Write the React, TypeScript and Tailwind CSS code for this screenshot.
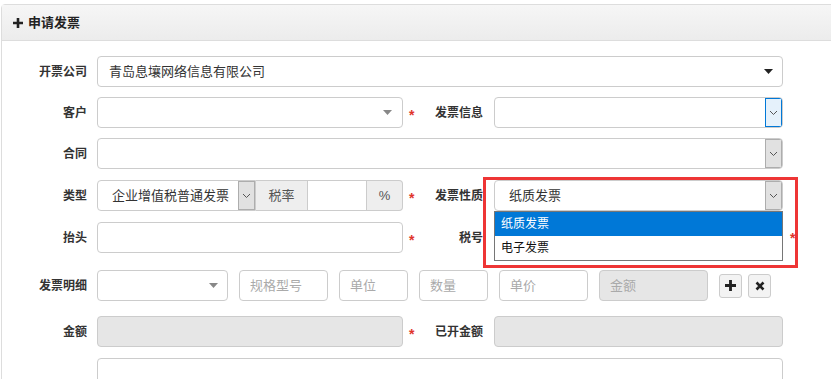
import React from 'react';

const font = { fontFamily: '"Liberation Sans", "Noto Sans CJK SC", sans-serif' };

function Chevron({ className = '' }: { className?: string }) {
	return (
		<svg width="9" height="6" viewBox="0 0 9 6" className={className}>
			<path d="M1 1 L4.5 4.5 L8 1" fill="none" stroke="#555" strokeWidth="1" />
		</svg>
	);
}

function Caret({ color }: { color: string }) {
	return (
		<svg width="9" height="5" viewBox="0 0 9 5">
			<path d="M0 0 H9 L4.5 5 Z" fill={color} />
		</svg>
	);
}

function Label({ children, w = 'w-[85px]' }: { children: React.ReactNode; w?: string }) {
	return <div className={`${w} shrink-0 text-right text-[12px] font-bold text-[#333] whitespace-nowrap`}>{children}</div>;
}

function Star() {
	return <span className="w-[13px] shrink-0 pl-[6px] pt-[4px] text-[14px] font-bold leading-none text-[#e0342b]">*</span>;
}

function Box({ className = '', children }: { className?: string; children?: React.ReactNode }) {
	return (
		<div className={`h-[31px] shrink-0 rounded-[4px] border border-[#ccc] flex items-center text-[13px] text-[#333] ${className}`}>
			{children}
		</div>
	);
}

function NativeSelect({ focus = false }: { focus?: boolean }) {
	return (
		<div
			className={`h-full w-[17px] flex items-center justify-center border ${
				focus ? 'border-[#0078d7] bg-[#e5f1fb]' : 'border-[#adadad] bg-[#e1e1e1]'
			}`}
		>
			<Chevron />
		</div>
	);
}

export default function App() {
	return (
		<div className="w-[831px] h-[379px] overflow-hidden bg-white pt-[4px] pl-[1px]" style={font}>
			<div className="relative w-[840px] h-[420px] rounded-tl-[4px] border border-[#ddd]">
				<div className="h-[36px] flex items-center gap-[5px] pl-[11px] border-b border-[#ddd] bg-gradient-to-b from-[#f6f6f6] to-[#ececec]">
					<svg width="10" height="10" viewBox="0 0 10 10">
						<path d="M3.7 0 H6.3 V3.7 H10 V6.3 H6.3 V10 H3.7 V6.3 H0 V3.7 H3.7 Z" fill="#222" />
					</svg>
					<span className="text-[13px] font-bold text-[#222]">申请发票</span>
				</div>

				<div className="pt-[15px] flex flex-col">
					{/* 开票公司 */}
					<div className="flex items-center gap-[10px]">
						<Label>开票公司</Label>
						<Box className="w-[686px] justify-between pl-[11px] pr-[9px]">
							<span>青岛息壤网络信息有限公司</span>
							<Caret color="#222" />
						</Box>
					</div>

					{/* 客户 / 发票信息 */}
					<div className="flex items-center mt-[10px]">
						<Label>客户</Label>
						<Box className="ml-[10px] w-[306px] justify-end pr-[10px]">
							<Caret color="#888" />
						</Box>
						<Star />
						<Label w="w-[67px]">发票信息</Label>
						<Box className="ml-[11px] w-[289px] justify-end overflow-hidden">
							<NativeSelect focus />
						</Box>
					</div>

					{/* 合同 */}
					<div className="flex items-center mt-[10px] gap-[10px]">
						<Label>合同</Label>
						<Box className="w-[686px] justify-end overflow-hidden">
							<NativeSelect />
						</Box>
					</div>

					{/* 类型 / 发票性质 */}
					<div className="flex items-center mt-[11px]">
						<Label>类型</Label>
						<div className="ml-[10px] w-[306px] h-[31px] flex text-[13px] text-[#333]">
							<div className="w-[159px] flex items-center justify-between rounded-l-[4px] border border-[#ccc] pl-[14px] overflow-hidden">
								<span>企业增值税普通发票</span>
								<NativeSelect />
							</div>
							<div className="w-[51px] flex items-center justify-center border-y border-[#ccc] bg-[#eee] text-[#555]">税率</div>
							<div className="w-[60px] border border-[#ccc] bg-white" />
							<div className="w-[36px] flex items-center justify-center rounded-r-[4px] border-y border-r border-[#ccc] bg-[#eee] text-[#555]">%</div>
						</div>
						<Star />
						<Label w="w-[67px]">发票性质</Label>
						<div className="relative z-20 ml-[11px]">
							<Box className="w-[289px] justify-between border-[#1d3f8c] pl-[14px] overflow-hidden bg-white">
								<span>纸质发票</span>
								<NativeSelect />
							</Box>
							<div className="absolute top-full left-0 w-[289px] border border-[#767676] bg-white text-[12px]">
								<div className="h-[24px] flex items-center px-[6px] bg-[#0078d7] text-white">纸质发票</div>
								<div className="h-[24px] flex items-center px-[6px] text-[#111]">电子发票</div>
							</div>
						</div>
					</div>

					{/* 抬头 / 税号 */}
					<div className="flex items-center mt-[11px]">
						<Label>抬头</Label>
						<Box className="ml-[10px] w-[306px]" />
						<Star />
						<Label w="w-[67px]">税号</Label>
						<Box className="ml-[11px] w-[289px]" />
						<div className="relative z-30 ml-[1px]">
							<Star />
						</div>
					</div>

					{/* 发票明细 */}
					<div className="flex items-center mt-[17px]">
						<Label>发票明细</Label>
						<Box className="ml-[10px] w-[131px] justify-end pr-[9px]">
							<Caret color="#888" />
						</Box>
						<Box className="ml-[11px] w-[89px] pl-[10px] text-[#aaa]">规格型号</Box>
						<Box className="ml-[11px] w-[69px] pl-[10px] text-[#aaa]">单位</Box>
						<Box className="ml-[11px] w-[69px] pl-[10px] text-[#aaa]">数量</Box>
						<Box className="ml-[11px] w-[89px] pl-[10px] text-[#aaa]">单价</Box>
						<Box className="ml-[11px] w-[109px] pl-[10px] bg-[#e6e6e6] text-[#aaa]">金额</Box>
						<button className="ml-[11px] w-[23px] h-[24px] flex items-center justify-center rounded-[3px] border border-[#ccc] bg-[#f3f3f3]">
							<svg width="11" height="11" viewBox="0 0 10 10">
								<path d="M3.7 0 H6.3 V3.7 H10 V6.3 H6.3 V10 H3.7 V6.3 H0 V3.7 H3.7 Z" fill="#222" />
							</svg>
						</button>
						<button className="ml-[6px] w-[23px] h-[24px] flex items-center justify-center rounded-[3px] border border-[#ccc] bg-[#f3f3f3]">
							<svg width="10" height="10" viewBox="0 0 10 10">
								<path d="M1.5 1.5 L8.5 8.5 M8.5 1.5 L1.5 8.5" stroke="#222" strokeWidth="2.6" />
							</svg>
						</button>
					</div>

					{/* 金额 / 已开金额 */}
					<div className="flex items-center mt-[15px]">
						<Label>金额</Label>
						<Box className="ml-[10px] w-[306px] bg-[#e6e6e6]" />
						<Star />
						<Label w="w-[67px]">已开金额</Label>
						<Box className="ml-[11px] w-[289px] bg-[#e6e6e6]" />
					</div>

					{/* 备注 */}
					<div className="flex mt-[11px] gap-[10px]">
						<div className="w-[85px]" />
						<div className="w-[686px] h-[60px] rounded-[4px] border border-[#ccc]" />
					</div>
				</div>

				<div className="absolute z-10 left-[481px] top-[172px] w-[315px] h-[91px] border-[3px] border-[#ee3535] bg-white pointer-events-none" />
			</div>
		</div>
	);
}
